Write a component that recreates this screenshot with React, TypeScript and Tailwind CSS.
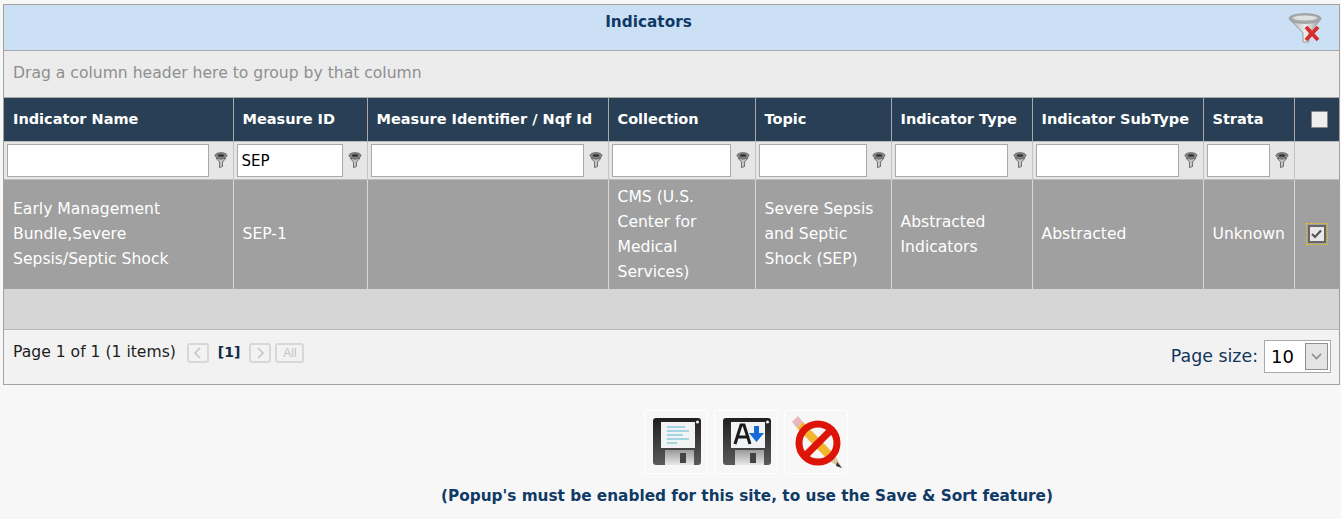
import React from "react";

const columns = [
  { name: "Indicator Name", width: "w-[229px]", input: "w-[202px]", value: "" },
  { name: "Measure ID", width: "w-[134px]", input: "w-[106px]", value: "SEP" },
  { name: "Measure Identifier / Nqf Id", width: "w-[241px]", input: "w-[213px]", value: "" },
  { name: "Collection", width: "w-[147px]", input: "w-[119px]", value: "" },
  { name: "Topic", width: "w-[136px]", input: "w-[108px]", value: "" },
  { name: "Indicator Type", width: "w-[141px]", input: "w-[113px]", value: "" },
  { name: "Indicator SubType", width: "w-[171px]", input: "w-[143px]", value: "" },
  { name: "Strata", width: "w-[91px]", input: "w-[63px]", value: "" },
];

const row = [
  ["Early Management", "Bundle,Severe", "Sepsis/Septic Shock"],
  ["SEP-1"],
  [],
  ["CMS (U.S.", "Center for", "Medical", "Services)"],
  ["Severe Sepsis", "and Septic", "Shock (SEP)"],
  ["Abstracted", "Indicators"],
  ["Abstracted"],
  ["Unknown"],
];

function FilterIcon() {
  return (
    <svg width="14" height="17" viewBox="0 0 14 17" className="shrink-0">
      <path d="M2 6 L5.5 10 V15.5 L8.5 14.5 V10 L12 6 Q7 8.5 2 6Z" fill="#c4c4c4" stroke="#555" strokeWidth="0.8" />
      <ellipse cx="7" cy="3.5" rx="6" ry="2.8" fill="#8a8a8a" stroke="#666" />
      <ellipse cx="7" cy="3.5" rx="3.4" ry="1.3" fill="#333" />
    </svg>
  );
}

function ClearFilterIcon() {
  return (
    <svg width="34" height="32" viewBox="0 0 34 32">
      <defs>
        <linearGradient id="cone" x1="0" y1="0" x2="1" y2="0">
          <stop offset="0" stopColor="#a8aaab" />
          <stop offset="0.5" stopColor="#eceded" />
          <stop offset="1" stopColor="#a0a2a3" />
        </linearGradient>
      </defs>
      <path d="M1.5 6 L15 20 V29 L21 29 V20 L33 6Z" fill="url(#cone)" stroke="#9a9c9e" />
      <ellipse cx="17" cy="5.5" rx="16" ry="4.8" fill="#a9abac" stroke="#999b9d" />
      <ellipse cx="17" cy="5" rx="12" ry="2.6" fill="#dfe0e0" />
      <path d="M18 14 L30 27 M30 14 L18 27" stroke="#d92b2b" strokeWidth="3.8" />
    </svg>
  );
}

function PagerButton({ children, wide }: { children: React.ReactNode; wide?: boolean }) {
  return (
    <span
      className={`flex h-[20px] items-center justify-center rounded-[3px] border-2 border-[#d8d8d8] bg-[#f2f2f2] font-['Liberation_Sans',sans-serif] text-[12px] text-[#c4c4c4] ${
        wide ? "w-[29px]" : "w-[22px]"
      }`}
    >
      {children}
    </span>
  );
}

function FloppyDisk({ children }: { children: React.ReactNode }) {
  return (
    <svg width="48" height="47" viewBox="0 0 48 47" className="ml-[2px]">
      <defs>
        <linearGradient id="disk" x1="0" y1="0" x2="0" y2="1">
          <stop offset="0" stopColor="#1f1f1f" />
          <stop offset="1" stopColor="#5a5a5a" />
        </linearGradient>
        <linearGradient id="shutter" x1="0" y1="0" x2="0" y2="1">
          <stop offset="0" stopColor="#9a9a9a" />
          <stop offset="1" stopColor="#e8e8e8" />
        </linearGradient>
      </defs>
      <path d="M3 0 H45 Q48 0 48 3 V44 Q48 47 45 47 H3 Q0 47 0 44 V3 Q0 0 3 0Z" fill="url(#disk)" />
      <rect x="8" y="4" width="34" height="26" fill="#f2f3f5" />
      <rect x="12" y="32" width="29" height="15" fill="url(#shutter)" />
      <rect x="27" y="35" width="6" height="10" fill="#444" />
      <circle cx="44.5" cy="4" r="1.6" fill="#eee" />
      {children}
    </svg>
  );
}

function IconTile({ children }: { children: React.ReactNode }) {
  return (
    <div className="flex h-[64px] w-[64px] items-center justify-center rounded-[2px] border border-white">
      {children}
    </div>
  );
}

export default function App() {
  return (
    <div className="h-[519px] w-[1341px] overflow-hidden bg-[#f7f7f7] pl-[3px] pt-[4px] font-['DejaVu_Sans',sans-serif] text-[15.6px]">
      <div className="w-[1337px] border border-[#a2a2a2]">
        <div className="relative flex h-[45px] justify-center bg-[#cbe0f5] pr-[46px] pt-[6px] text-[15.3px] font-bold text-[#0f3a66]">
          Indicators
          <span className="absolute right-[17px] top-[8px]">
            <ClearFilterIcon />
          </span>
        </div>
        <div className="flex h-[47px] items-center border-t border-[#a9a9a9] bg-[#ececec] pl-[9px] text-[#8f8f8f]">
          Drag a column header here to group by that column
        </div>
        <table className="w-full table-fixed border-collapse">
          <thead>
            <tr className="h-[44px] bg-[#283f55] text-left font-bold text-white">
              {columns.map((c) => (
                <th key={c.name} className={`${c.width} whitespace-nowrap border-x border-t border-[#a9a9a9] pl-[9px] text-[14.5px] font-bold first:border-l-0`}>
                  {c.name}
                </th>
              ))}
              <th className="border-l border-t border-[#a9a9a9]">
                <span className="ml-[16px] block h-[17px] w-[17px] rounded-[1px] border border-[#888] bg-[#eeeeee]" />
              </th>
            </tr>
            <tr className="h-[38px] border-y border-[#bdbdbd] bg-[#e6e6e6]">
              {columns.map((c) => (
                <td key={c.name} className="border-x border-[#c4c4c4] pl-[3px] first:border-l-0">
                  <div className="flex items-center gap-[5px]">
                    <input
                      readOnly
                      value={c.value}
                      className={`${c.input} h-[33px] border border-[#a9a9a9] bg-white pl-[4px] text-[15px] text-black`}
                    />
                    <FilterIcon />
                  </div>
                </td>
              ))}
              <td className="border-l border-[#c4c4c4]" />
            </tr>
          </thead>
          <tbody>
            <tr className="h-[109px] bg-[#a0a0a0] text-white">
              {row.map((lines, i) => (
                <td
                  key={i}
                  className={`whitespace-nowrap border-x border-[#d8d8d8] pl-[9px] leading-[25px] first:border-l-0 ${
                    lines.length % 2 === 0 ? "pt-[2px]" : ""
                  }`}
                >
                  {lines.map((l) => (
                    <div key={l}>{l}</div>
                  ))}
                </td>
              ))}
              <td className="border-l border-[#d8d8d8]">
                <span className="mx-auto flex h-[22px] w-[22px] items-center justify-center border border-dotted border-[#f5c400]">
                  <span className="flex h-[18px] w-[18px] items-center justify-center border-2 border-[#666] bg-[#e8e8e8]">
                    <svg width="11" height="10" viewBox="0 0 11 10">
                      <path d="M1 5 L4 8 L10 1.5" fill="none" stroke="#555" strokeWidth="2.2" />
                    </svg>
                  </span>
                </span>
              </td>
            </tr>
          </tbody>
        </table>
        <div className="h-[40px] bg-[#d6d6d6]" />
        <div className="flex h-[55px] justify-between border-t border-[#b9b9b9] bg-[#f2f2f2] pl-[9px] pr-[8px]">
          <div className="flex h-[44px] items-center whitespace-nowrap pt-[2px] text-[#1c1c1c]">
            Page 1 of 1 (1 items)
            <span className="ml-[11px] flex items-center gap-[9px]">
              <PagerButton>
                <svg width="9" height="12" viewBox="0 0 9 12">
                  <path d="M7 1 L2 6 L7 11" fill="none" stroke="#c4c4c4" strokeWidth="1.6" />
                </svg>
              </PagerButton>
              <span className="text-[14px] font-bold text-[#0f2a45]">[1]</span>
            </span>
            <span className="ml-[9px] flex items-center gap-[4px]">
              <PagerButton>
                <svg width="9" height="12" viewBox="0 0 9 12">
                  <path d="M2 1 L7 6 L2 11" fill="none" stroke="#c4c4c4" strokeWidth="1.6" />
                </svg>
              </PagerButton>
              <PagerButton wide>All</PagerButton>
            </span>
          </div>
          <div className="flex items-center gap-[6px] text-[17.4px] text-[#12365c]">
            Page size:
            <div className="flex h-[33px] w-[67px] items-center justify-between border border-[#a9a9a9] bg-white pl-[6px] pr-[2px] text-[18px] text-[#000]">
              <span>10</span>
              <span className="flex h-[27px] w-[23px] items-center justify-center border border-[#8f8f8f] bg-[#e4e4e4]">
                <svg width="11" height="7" viewBox="0 0 11 7">
                  <path d="M1 1 L5.5 5.5 L10 1" fill="none" stroke="#8a8a8a" strokeWidth="1.6" />
                </svg>
              </span>
            </div>
          </div>
        </div>
      </div>
      <div className="ml-[641px] mt-[25px] flex gap-[6px]">
        <IconTile>
          <FloppyDisk>
            <path d="M14 9 H32 M14 13 H36 M14 17 H30 M14 21 H36 M14 25 H24" stroke="#59b3d0" strokeWidth="1.2" />
          </FloppyDisk>
        </IconTile>
        <IconTile>
          <FloppyDisk>
            <path d="M12 26 L18 7 H21 L27 26 M14 19 H25" fill="none" stroke="#1a1a1a" strokeWidth="3" />
            <path d="M31 8 H36 V15 H41 L33.5 24 L26 15 H31Z" fill="#1769d8" />
          </FloppyDisk>
        </IconTile>
        <IconTile>
          <svg width="56" height="56" viewBox="0 0 56 56">
            <path d="M4 8 L10 2 L15 8 L9 14Z" fill="#e7b8bb" />
            <path d="M9 14 L15 8 L47 41 L41 47Z" fill="#f4b52e" />
            <path d="M41 47 L47 41 L54 54Z" fill="#d6c7a0" />
            <path d="M49 48 L48 52 L54 54Z" fill="#333" />
            <circle cx="30" cy="29" r="19" fill="none" stroke="#dd1408" strokeWidth="7" />
            <path d="M43 16 L17 42" stroke="#dd1408" strokeWidth="7" />
          </svg>
        </IconTile>
      </div>
      <div className="mt-[11px] w-[1337px] whitespace-nowrap pl-[151px] text-center text-[15.3px] font-bold text-[#103a66]">
        (Popup's must be enabled for this site, to use the Save &amp; Sort feature)
      </div>
    </div>
  );
}
